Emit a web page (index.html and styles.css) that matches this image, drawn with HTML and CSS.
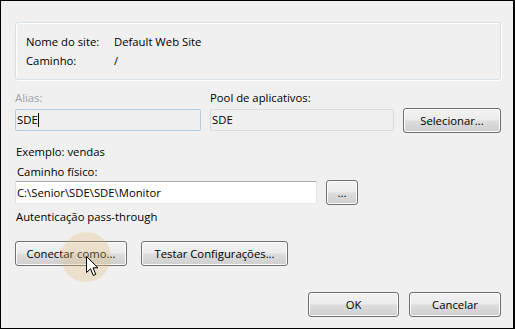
FILE: index.html
```html
<!DOCTYPE html>
<html lang="pt-BR">
<head>
  <meta charset="UTF-8" />
  <title>Adicionar Diretório Virtual</title>
  <link rel="stylesheet" href="styles.css">
</head>

<body>
  <div class="dialog">
    <div class="siteInfo">
      <div class="infoRow"><span class="infoKey">Nome do site:</span><span>Default Web Site</span></div>
      <div class="infoRow"><span class="infoKey">Caminho:</span><span>/</span></div>
    </div>

    <div class="aliasGrid">
      <label class="disabled">Alias:</label>
      <label>Pool de aplicativos:</label>
      <span></span>
      <div class="textbox focused">SDE<span class="caret"></span></div>
      <div class="textbox readonly">SDE</div>
      <button class="winBtn selectBtn">Selecionar...</button>
    </div>

    <p class="hint exemplo">Exemplo: vendas</p>

    <label class="pathLabel">Caminho físico:</label>
    <div class="pathRow">
      <div class="textbox pathBox">C:\Senior\SDE\SDE\Monitor</div>
      <button class="winBtn browseBtn">...</button>
    </div>

    <p class="hint auth">Autenticação pass-through</p>

    <div class="actionRow">
      <button class="winBtn connectBtn">Conectar como...</button>
      <button class="winBtn testBtn">Testar Configurações...</button>
    </div>

    <div class="footer">
      <button class="winBtn okBtn">OK</button>
      <button class="winBtn cancelBtn">Cancelar</button>
    </div>

    <div class="clickGlow"></div>
    <svg class="pointer" width="13" height="21" viewBox="0 0 13 21">
      <path d="M0.5 0.5 L0.5 16.5 L4.5 12.8 L7.3 19.5 L9.8 18.4 L7 11.8 L12 11.8 Z" fill="#fff" stroke="#000" stroke-width="1" stroke-linejoin="miter"/>
    </svg>
  </div>
</body>
</html>
```

FILE: styles.css
```css
* {
  box-sizing: border-box;
  margin: 0;
  padding: 0;
}

body {
  font-family: "Open Sans", "Liberation Sans", sans-serif;
  font-size: 11.3px;
  color: #000;
  background: #f0f0f0;
}

.dialog {
  position: relative;
  width: 515px;
  height: 329px;
  border: 1px solid #000;
  border-right-width: 2px;
  background: #f0f0f0;
  padding: 21px 12px 0 14px;
  display: flex;
  flex-direction: column;
}

.siteInfo {
  height: 58px;
  border: 1px solid #d5dfe5;
  border-radius: 3px;
  box-shadow: inset 1px 1px 0 #fff, 1px 1px 0 #fff;
  padding: 9px 10px 0 10px;
}

.infoRow {
  display: flex;
  line-height: 19px;
}

.infoKey {
  width: 88px;
}

label {
  display: block;
  line-height: 15px;
}

.disabled {
  color: #a0a0a0;
}

.aliasGrid {
  margin-top: 10px;
  display: grid;
  grid-template-columns: 186px 184px 98px;
  grid-template-rows: 15px 22px;
  column-gap: 9px;
  row-gap: 4px;
}

.textbox {
  height: 22px;
  line-height: 20px;
  padding-left: 1px;
  border: 1px solid #dadada;
  border-radius: 2px;
  background: #f0f0f0;
  white-space: nowrap;
}

.focused {
  border-color: #b4cbe1;
}

.caret {
  display: inline-block;
  width: 1px;
  height: 14px;
  background: #000;
  vertical-align: -3px;
}

.selectBtn {
  margin-top: -1px;
  height: 25px;
}

.hint {
  line-height: 15px;
}

.exemplo {
  margin-top: 13px;
  padding-left: 1px;
}

.pathLabel {
  margin-top: 5px;
  padding-left: 2px;
}

.pathRow {
  display: flex;
  gap: 9px;
  margin-top: 1px;
}

.pathBox {
  width: 302px;
  height: 23px;
  margin-top: 1px;
  line-height: 21px;
  background: #fff;
  border-color: #abadb3 #e2e3ea #e3e9ef #dbdfe6;
}

.browseBtn {
  width: 32px;
  height: 25px;
}

.auth {
  margin-top: 4px;
  padding-left: 1px;
}

.actionRow {
  display: flex;
  gap: 14px;
  margin-top: 17px;
}

.connectBtn {
  width: 112px;
}

.testBtn {
  width: 147px;
}

.footer {
  display: flex;
  justify-content: flex-end;
  gap: 10px;
  margin-top: 26px;
}

.okBtn {
  width: 91px;
  border-color: #3c7fb1;
  box-shadow: inset 0 0 0 1px #a4dcf6;
}

.cancelBtn {
  width: 92px;
}

.winBtn {
  height: 25px;
  font: inherit;
  color: #000;
  border: 1px solid #707070;
  border-radius: 3px;
  background: linear-gradient(#f2f2f2 0%, #ebebeb 48%, #dddddd 52%, #cfcfcf 100%);
  box-shadow: inset 0 0 0 1px #fbfbfb;
  padding: 0;
}

.clickGlow {
  position: absolute;
  left: 60px;
  top: 231px;
  width: 50px;
  height: 50px;
  border-radius: 50%;
  background: rgba(225, 190, 120, 0.3);
}

.pointer {
  position: absolute;
  left: 85px;
  top: 255px;
}
```
